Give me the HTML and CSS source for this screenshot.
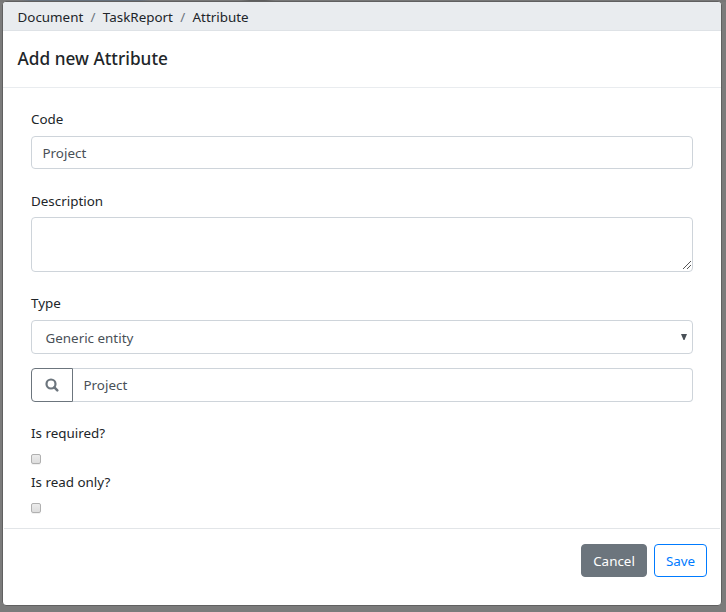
FILE: index.html
```
<!DOCTYPE html>
<html lang="en">
<head>
<meta charset="utf-8">
<title>Add new Attribute</title>
<link rel="stylesheet" href="styles.css">
</head>
<body>
<div class="modal">
  <nav class="breadcrumb"><span>Document</span><span class="slash">/</span><span>TaskReport</span><span class="slash">/</span><span>Attribute</span></nav>
  <header class="header"><h1>Add new Attribute</h1></header>
  <main class="body">
    <label class="label" for="code">Code</label>
    <input class="control code" id="code" value="Project">
    <label class="label">Description</label>
    <div class="control area">
      <svg width="9" height="9" viewBox="0 0 9 9" shape-rendering="crispEdges"><path d="M.5 8.5l8-8M4.5 8.5l4-4" fill="none" stroke="#555" stroke-width="1"/></svg>
    </div>
    <label class="label">Type</label>
    <div class="control select"><span>Generic entity</span><svg width="6" height="6" viewBox="0 0 6 6"><path d="M0 0h6L3.5 6h-1z" fill="#495057"/></svg></div>
    <div class="group">
      <button class="search" aria-label="Search"><svg width="14" height="14" viewBox="0 0 14 14" fill="none" stroke="#6c757d"><circle cx="6" cy="6" r="4.5" stroke-width="2.2"/><path d="M9.4 9.4l2.9 2.9" stroke-width="2.5" stroke-linecap="round"/></svg></button>
      <input class="control entity" value="Project" aria-label="Entity">
    </div>
    <label class="label required" for="required">Is required?</label>
    <input class="check" type="checkbox" id="required">
    <label class="label readonly" for="readonly">Is read only?</label>
    <input class="check" type="checkbox" id="readonly">
  </main>
  <footer class="footer"><button class="btn cancel">Cancel</button><button class="btn save">Save</button></footer>
</div>
</body>
</html>
```
FILE: styles.css
```
* { box-sizing: border-box; }
body {
  margin: 0;
  height: 612px;
  padding: 1px 4px 6px 2px;
  overflow: hidden;
  background: linear-gradient(90deg, #777 0 20px, #66717d 30px 140px, #777 150px 240px, #5f5f5f 250px 265px, #777 275px) 0 0 / 100% 2px no-repeat #7b7b7b;
  font: 13.4px/20px "Noto Sans", sans-serif;
  color: #212529;
}
input, button { font: inherit; letter-spacing: inherit; }
.modal {
  display: flex;
  flex-direction: column;
  width: 720px;
  height: 605px;
  border: 1px solid #606060;
  border-radius: 4px;
  background: #fff;
  overflow: hidden;
}
.breadcrumb {
  display: flex;
  height: 29px;
  padding: 5px 14.5px;
  background: #e9ecef;
  border-bottom: 1px solid #dee2e6;
}
.slash { width: 19.6px; text-align: center; color: #6c757d; }
.header {
  height: 57px;
  padding: 16px 14.5px;
  border-bottom: 1px solid #e9ecef;
}
h1 { margin: 0; font-size: 17.2px; line-height: 24px; font-weight: 500; letter-spacing: .03px; }
.body { height: 440px; padding: 21px 28px 0; display: flex; flex-direction: column; align-items: flex-start; }
.label { display: block; height: 20px; margin-bottom: 7px; }
.control {
  width: 662px;
  border: 1px solid #ced4da;
  border-radius: 4px;
  background: #fff;
  color: #495057;
  outline: 0;
}
.code { height: 33px; padding: 0 10.5px; margin-bottom: 22px; }
.code + .label { margin-bottom: 6px; }
.area { display: flex; align-items: flex-end; justify-content: flex-end; height: 55px; padding: 1px; margin-bottom: 21px; }
.select { display: flex; align-items: center; justify-content: space-between; height: 34px; padding: 1px 5px 0 13.5px; margin-bottom: 14px; }
.select svg { margin-top: -2px; }
.group { display: flex; height: 34px; margin-bottom: 21px; }
.search {
  display: flex; align-items: center; justify-content: center;
  width: 42px; padding: 0 1px 0 0;
  border: 1px solid #6c757d;
  border-radius: 4px 0 0 4px;
  background: #fff;
}
.entity { width: 620px; border-left: 0; border-radius: 0 4px 4px 0; padding: 0 10.5px; }
.required, .readonly { margin-bottom: 11px; }
.check {
  appearance: none;
  width: 10px; height: 10px; margin: 0;
  border: 1px solid #b0b0b0;
  border-radius: 2px;
  background: linear-gradient(#ececec, #ddd);
  box-shadow: 0 1px 0 #f1f1f1;
}
.readonly { margin-top: 8px; }
.footer {
  display: flex;
  justify-content: flex-end;
  gap: 7px;
  flex: 1;
  margin: 0 1px;
  padding: 15px 13px;
  border-top: 1px solid #e2e5e8;
}
.btn { height: 33px; padding: 0; border: 1px solid; border-radius: 4px; }
.cancel { width: 66px; background: #6c757d; border-color: #6c757d; color: #fff; }
.save { width: 53px; background: #fff; border-color: #007bff; color: #007bff; }
```
